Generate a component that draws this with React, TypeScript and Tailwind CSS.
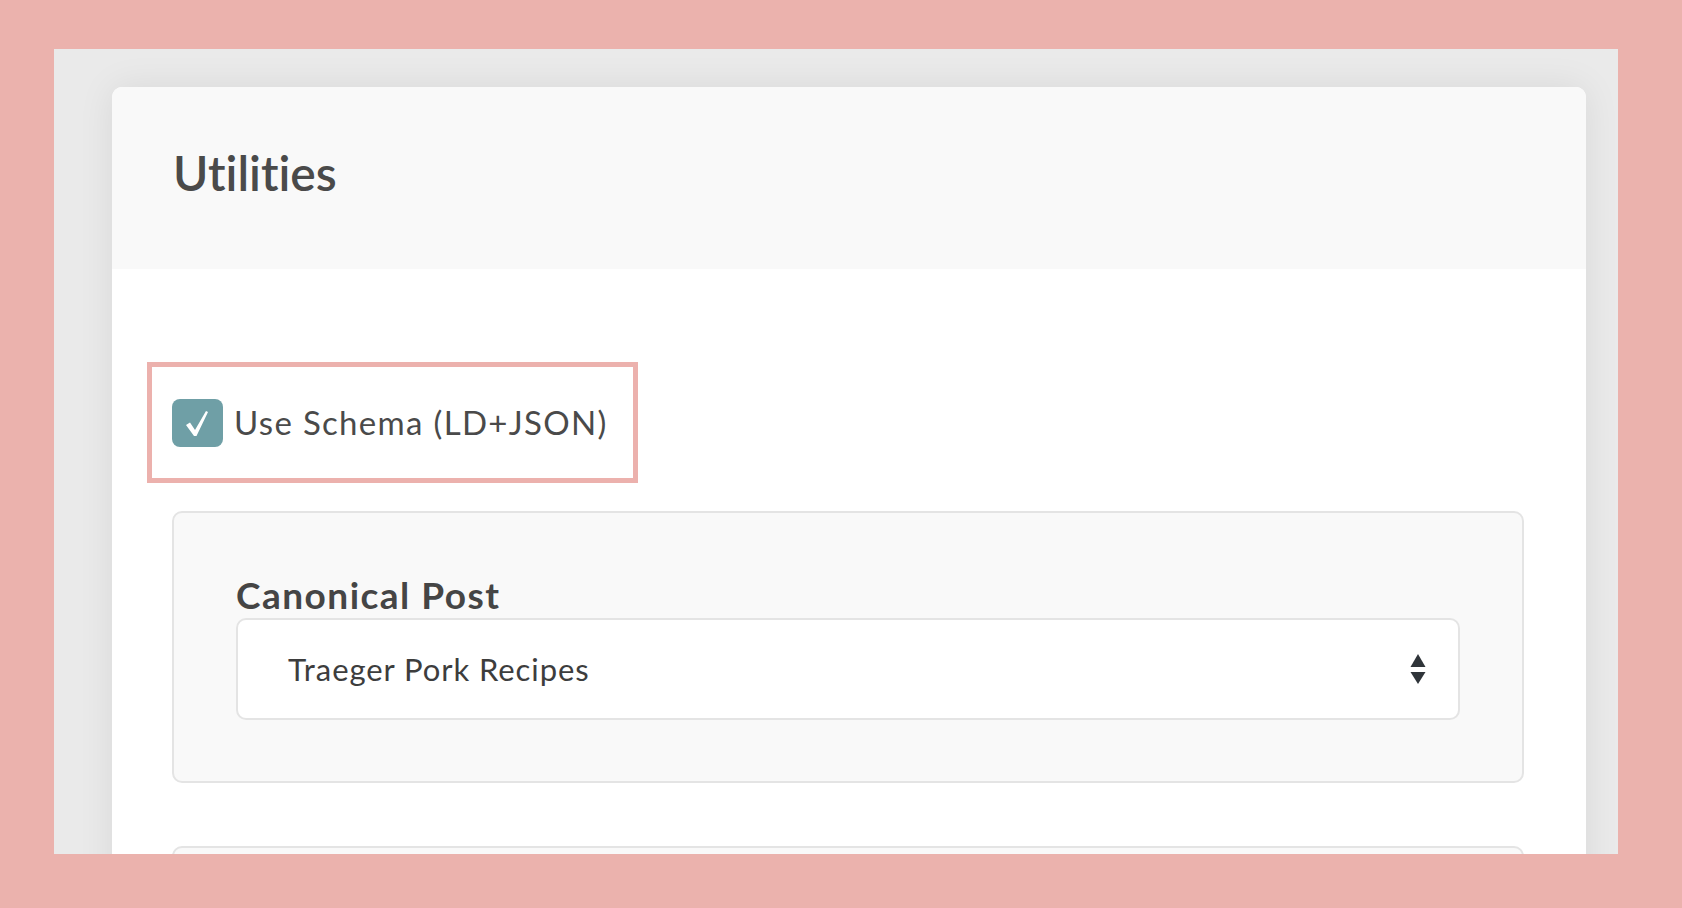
const font = { fontFamily: "Lato, 'Open Sans', sans-serif" };

function CheckMark() {
  return (
    <svg width="51" height="48" viewBox="0 0 51 48">
      <path
        d="M14 26 L18 23.5 L23 31 L34 12 L36 13 L24.5 37 L22 37 Z"
        fill="white"
      />
    </svg>
  );
}

function SelectArrows() {
  return (
    <svg width="16" height="31" viewBox="0 0 16 31">
      <path d="M8 0 L15.5 13 L0.5 13 Z" fill="#2f3439" />
      <path d="M0.5 18 L15.5 18 L8 30 Z" fill="#2f3439" />
    </svg>
  );
}

export default function App() {
  return (
    <div
      className="w-full h-[908px] bg-[#ebb2ad] pt-[49px] pl-[54px] pr-[64px] pb-[54px] [font-variant-ligatures:none]"
      style={font}
    >
      <div className="h-[805px] bg-[#eaeaea] overflow-hidden pl-[58px] pr-[32px] pt-[38px]">
        <div className="rounded-t-[10px] bg-white shadow-[0_0_36px_rgba(0,0,0,0.08)] overflow-hidden">
          <div className="h-[182px] bg-[#f9f9f9] pl-[61px] pt-[62px]">
            <h1 className="text-[48px] leading-none font-semibold text-[#4a4a4a]">
              Utilities
            </h1>
          </div>

          <div className="pl-[35px] pr-[62px] pt-[93px] pb-[40px]">
            <div className="w-[491px] h-[121px] border-[5px] border-[#ecb1ad] flex items-center pl-[20px] gap-[11px]">
              <div className="w-[51px] h-[48px] rounded-[8px] bg-[#6f9fa6] flex items-center justify-center">
                <CheckMark />
              </div>
              <span className="text-[33px] leading-none tracking-[0.04em] text-[#4a4a4a]">
                Use Schema (LD+JSON)
              </span>
            </div>

            <div className="ml-[25px] mt-[28px] flex flex-col gap-[63px]">
              <div className="h-[272px] bg-[#f9f9f9] border-2 border-[#e4e4e4] rounded-[10px] p-[62px] pt-[63px]">
                <div className="text-[37px] leading-none font-bold tracking-[0.04em] text-[#454545]">
                  Canonical Post
                </div>
                <div className="mt-[5px] h-[102px] bg-white border-2 border-[#e4e4e4] rounded-[10px] flex items-center justify-between pl-[50px] pr-[32px]">
                  <span className="text-[31px] leading-none tracking-[0.03em] text-[#3d3d3d]">
                    Traeger Pork Recipes
                  </span>
                  <SelectArrows />
                </div>
              </div>
              <div className="h-[200px] bg-[#f9f9f9] border-2 border-[#e4e4e4] rounded-[10px]" />
            </div>
          </div>
        </div>
      </div>
    </div>
  );
}
